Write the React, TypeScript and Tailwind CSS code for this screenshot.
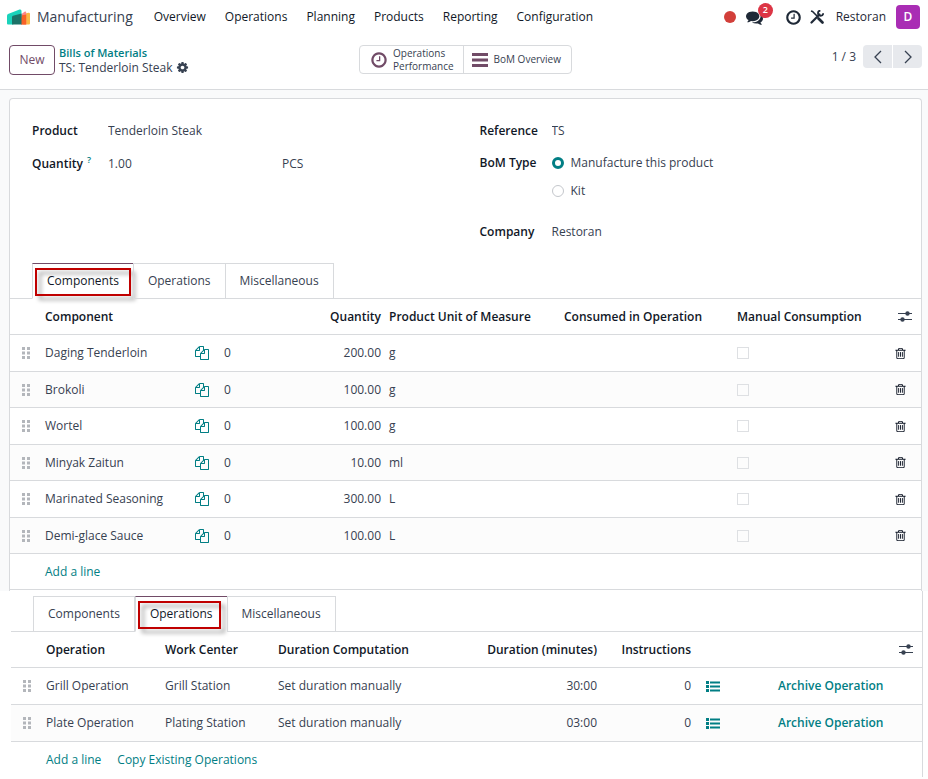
import type { ReactNode } from 'react'
import clsx from 'clsx'

const MENU = ['Overview', 'Operations', 'Planning', 'Products', 'Reporting', 'Configuration']
const TABS = ['Components', 'Operations', 'Miscellaneous']

const COMPONENTS = [
  { name: 'Daging Tenderloin', qty: '200.00', uom: 'g' },
  { name: 'Brokoli', qty: '100.00', uom: 'g' },
  { name: 'Wortel', qty: '100.00', uom: 'g' },
  { name: 'Minyak Zaitun', qty: '10.00', uom: 'ml' },
  { name: 'Marinated Seasoning', qty: '300.00', uom: 'L' },
  { name: 'Demi-glace Sauce', qty: '100.00', uom: 'L' },
]

const OPERATIONS = [
  { name: 'Grill Operation', center: 'Grill Station', duration: '30:00' },
  { name: 'Plate Operation', center: 'Plating Station', duration: '03:00' },
]

// Font Awesome 4 outlines, drawn on a 1792 grid
const PATHS = {
  clock:
    'M1024 544v448q0 14-9 23t-23 9h-320q-14 0-23-9t-9-23v-64q0-14 9-23t23-9h224v-352q0-14 9-23t23-9h64q14 0 23 9t9 23zm416 352q0-148-73-273t-198-198-273-73-273 73-198 198-73 273 73 273 198 198 273 73 273-73 198-198 73-273zm224 0q0 209-103 385.5t-279.5 279.5-385.5 103-385.5-103-279.5-279.5-103-385.5 103-385.5 279.5-279.5 385.5-103 385.5 103 279.5 279.5 103 385.5z',
  cog:
    'M1152 896q0-106-75-181t-181-75-181 75-75 181 75 181 181 75 181-75 75-181zm512-109v222q0 12-8 23t-20 13l-185 28q-19 54-39 91 35 50 107 138 10 12 10 25t-9 23q-27 37-99 108t-94 71q-12 0-26-9l-138-108q-44 23-91 38-16 136-29 186-7 28-36 28h-222q-14 0-24.5-8.5t-11.5-21.5l-28-184q-49-16-90-37l-141 107q-10 9-25 9-14 0-25-11-126-114-165-168-7-10-7-23 0-12 8-23 15-21 51-66.5t54-70.5q-27-50-41-99l-183-27q-13-2-21-12.5t-8-23.5v-222q0-12 8-23t19-13l186-28q14-46 39-92-40-57-107-138-10-12-10-24 0-10 9-23 26-36 98.5-107.5t94.5-71.5q13 0 26 10l138 107q44-23 91-38 16-136 29-186 7-28 36-28h222q14 0 24.5 8.5t11.5 21.5l28 184q49 16 90 37l142-107q9-9 24-9 13 0 25 10 129 119 165 170 7 8 7 22 0 12-8 23-15 21-51 66.5t-54 70.5q26 50 41 98l183 28q13 2 21 12.5t8 23.5z',
  comments:
    'M1408 768q0 139-94 257t-256.5 186.5-353.5 68.5q-86 0-176-16-124 88-278 128-36 9-86 16h-3q-11 0-20.5-8t-11.5-21q-1-3-1-6.5t.5-6.5 2-6l2.5-5 3.5-5.5 4-5 4.5-5 4-4.5q5-6 23-25t26-29.5 22.5-29 25-38.5 20.5-44q-124-72-195-177t-71-224q0-139 94-257t256.5-186.5 353.5-68.5 353.5 68.5 256.5 186.5 94 257zm384 256q0 120-71 224.5t-195 176.5q10 24 20.5 44t25 38.5 22.5 29 26 29.5 23 25q1 1 4 4.5t4.5 5 4 5 3.5 5.5l2.5 5 2 6 .5 6.5-1 6.5q-3 14-13 22t-22 7q-50-7-86-16-154-40-278-128-90 16-176 16-271 0-472-132 58 4 88 4 161 0 309-45t264-129q125-92 192-212t67-254q0-77-23-152 129 71 204 178t75 230z',
  copy:
    'M1696 384q40 0 68 28t28 68v1216q0 40-28 68t-68 28h-960q-40 0-68-28t-28-68v-288h-544q-40 0-68-28t-28-68v-672q0-40 20-88t48-76l408-408q28-28 76-48t88-20h416q40 0 68 28t28 68v328q68-40 128-40h416zm-544 213l-299 299h299v-299zm-640-384l-299 299h299v-299zm196 647l316-316v-416h-384v416q0 40-28 68t-68 28h-416v640h512v-256q0-40 20-88t48-76zm956 804v-1152h-384v416q0 40-28 68t-68 28h-416v640h896z',
  trash:
    'M704 736v576q0 14-9 23t-23 9h-64q-14 0-23-9t-9-23v-576q0-14 9-23t23-9h64q14 0 23 9t9 23zm256 0v576q0 14-9 23t-23 9h-64q-14 0-23-9t-9-23v-576q0-14 9-23t23-9h64q14 0 23 9t9 23zm256 0v576q0 14-9 23t-23 9h-64q-14 0-23-9t-9-23v-576q0-14 9-23t23-9h64q14 0 23 9t9 23zm128 724v-948h-896v948q0 22 7 40.5t14.5 27 10.5 8.5h832q3 0 10.5-8.5t14.5-27 7-40.5zm-672-1076h448l-48-117q-7-9-17-11h-317q-10 2-17 11zm928 32v64q0 14-9 23t-23 9h-96v948q0 83-47 143.5t-113 60.5h-832q-66 0-113-58.5t-47-141.5v-952h-96q-14 0-23-9t-9-23v-64q0-14 9-23t23-9h309l70-167q15-37 54-63t79-26h320q40 0 79 26t54 63l70 167h309q14 0 23 9t9 23z',
}

function Icon({ name, className }: { name: keyof typeof PATHS; className: string }) {
  return (
    <svg viewBox="0 0 1792 1792" fill="currentColor" className={className} aria-hidden="true">
      <path d={PATHS[name]} />
    </svg>
  )
}

function Logo() {
  return (
    <svg viewBox="0 0 23 16" className="h-4 w-[23px]" aria-hidden="true">
      <path d="M16 5l5.500-1.200q1.500-.2 1.500 1.200v9.500q0 1-1 1h-6z" fill="#fbb945" />
      <path d="M14 5.500l3.500-2.800q1.700-.7 1.700 1V15.500H14z" fill="#fc868b" />
      <path d="M14 6.500l5.200-1V15.500H14z" fill="#f86126" />
      <path d="M0 6.500q0-1 1-1.500L12.500.5Q14.500 0 14.500 2v6L6 15.500H1q-1 0-1-1z" fill="#1ad3bb" />
      <path d="M5 8q0-1 1-1.300l8.500-2.200v11H5z" fill="#1b7268" />
    </svg>
  )
}

function ToolsIcon() {
  return (
    <svg viewBox="0 0 14 14" className="size-3.5" fill="none" stroke="currentColor" aria-hidden="true">
      <path d="M1 1l1.500.5L7 6" strokeWidth="1.500" />
      <path d="M8.500 8.500l4 4" strokeWidth="2.600" strokeLinecap="round" />
      <path d="M1.500 12.500L9.500 4.500" strokeWidth="2.200" strokeLinecap="round" />
      <path d="M13.200 3.200a2.600 2.600 0 1 1-2.800-2.600" strokeWidth="1.800" />
    </svg>
  )
}

function AdjustIcon() {
  return (
    <svg viewBox="0 0 14 11" className="h-[11px] w-3.5 text-[#374151]" aria-hidden="true">
      <path d="M0 2.500h14M0 8.500h14" stroke="currentColor" />
      <circle cx="9.500" cy="2.500" r="2.200" fill="currentColor" />
      <circle cx="4.500" cy="8.500" r="2.200" fill="currentColor" />
    </svg>
  )
}

function ListIcon() {
  return (
    <svg viewBox="0 0 14 11" className="h-[11px] w-3.5" fill="currentColor" aria-hidden="true">
      <path d="M0 0h3v3H0zM0 4h3v3H0zM0 8h3v3H0zM4 .5h10v2H4zM4 4.500h10v2H4zM4 8.500h10v2H4z" />
    </svg>
  )
}

function DragHandle() {
  return (
    <svg viewBox="0 0 8 12" className="ml-2 h-3 w-2 text-[#b3b6bb]" fill="currentColor" aria-hidden="true">
      <path d="M0 0h3v3H0zM5 0h3v3H5zM0 4.500h3v3H0zM5 4.500h3v3H5zM0 9h3v3H0zM5 9h3v3H5z" />
    </svg>
  )
}

function Tabs({ active, marker }: { active: string; marker: string }) {
  return (
    <div role="tablist" className="flex border-b border-[#d8dadd] px-[22px]">
      {TABS.map((tab) => (
        <button
          key={tab}
          role="tab"
          aria-selected={tab === active}
          className={clsx(
            'relative -mb-px h-9 border px-3.5',
            tab === active
              ? 'border-[#d8dadd] border-t-[#714b67] border-b-white text-[#111827]'
              : '-ml-px border-[#d8dadd] first:ml-0',
          )}
        >
          {tab}
          {tab === active && (
            <span
              className={clsx(
                'absolute border-2 border-[#c00000] drop-shadow-[4px_4px_2px_rgba(0,0,0,0.4)]',
                marker,
              )}
            />
          )}
        </button>
      ))}
    </div>
  )
}

type FieldProps = { id: string; label: string; value: string; labelWidth: string; help?: boolean }

function Field({ id, label, value, labelWidth, help }: FieldProps) {
  return (
    <div className="flex h-[33px] items-center">
      <label htmlFor={id} className={clsx('shrink-0 font-semibold text-[#111827]', labelWidth)}>
        {label}
        {help && <sup className="ml-1 text-[9px] text-[#017e84]">?</sup>}
      </label>
      <input id={id} defaultValue={value} className="w-[174px] bg-transparent outline-none" />
      {help && <input aria-label="Unit of Measure" defaultValue="PCS" className="w-24 bg-transparent outline-none" />}
    </div>
  )
}

function BomTypeOption({ label, checked }: { label: string; checked?: boolean }) {
  return (
    <label className="flex h-7 items-center gap-[7px]">
      <input
        type="radio"
        name="bom_type"
        defaultChecked={checked}
        className="size-3 appearance-none rounded-full border border-[#c4c7cc] bg-white checked:border-[3px] checked:border-[#017e84]"
      />
      {label}
    </label>
  )
}

function ListTable({ children }: { children: ReactNode }) {
  return (
    <table className="w-full table-fixed border-separate border-spacing-0 text-left whitespace-nowrap [&_td]:border-b [&_td]:border-[#d8dadd] [&_td]:px-1 [&_th]:h-9 [&_th]:border-b [&_th]:border-[#d8dadd] [&_th]:px-1 [&_th]:font-semibold [&_th]:text-[#111827]">
      {children}
    </table>
  )
}

function ComponentsTable() {
  return (
    <ListTable>
      <colgroup>
        <col className="w-[31px]" />
        <col className="w-[150px]" />
        <col className="w-[84px]" />
        <col className="w-[110px]" />
        <col className="w-[175px]" />
        <col className="w-[173px]" />
        <col />
        <col className="w-10" />
      </colgroup>
      <thead>
        <tr>
          <th />
          <th>Component</th>
          <th />
          <th className="text-right">Quantity</th>
          <th>Product Unit of Measure</th>
          <th>Consumed in Operation</th>
          <th>Manual Consumption</th>
          <th>
            <button aria-label="Optional columns" className="ml-[13px] block">
              <AdjustIcon />
            </button>
          </th>
        </tr>
      </thead>
      <tbody>
        {COMPONENTS.map(({ name, qty, uom }) => (
          <tr key={name} className="odd:h-[37px] even:h-9 even:bg-[#fcfcfc]">
            <td><DragHandle /></td>
            <td>{name}</td>
            <td>
              <span className="flex items-center gap-[15px]">
                <button aria-label={`Bill of materials of ${name}`} className="text-[#017e84]">
                  <Icon name="copy" className="size-3.5" />
                </button>
                0
              </span>
            </td>
            <td className="text-right">{qty}</td>
            <td>{uom}</td>
            <td />
            <td>
              <input
                type="checkbox"
                aria-label={`Manual consumption of ${name}`}
                className="block size-3 appearance-none border border-[#dee0e3]"
              />
            </td>
            <td>
              <button aria-label={`Delete ${name}`} className="ml-[9px] block text-[#111827]">
                <Icon name="trash" className="size-[13px]" />
              </button>
            </td>
          </tr>
        ))}
        <tr className="h-9">
          <td />
          <td colSpan={7}>
            <a href="#" className="text-[#017e84]">Add a line</a>
          </td>
        </tr>
      </tbody>
    </ListTable>
  )
}

function OperationsTable() {
  return (
    <ListTable>
      <colgroup>
        <col className="w-[31px]" />
        <col className="w-[119px]" />
        <col className="w-[113px]" />
        <col className="w-[160px]" />
        <col className="w-[167px]" />
        <col className="w-[94px]" />
        <col className="w-[79px]" />
        <col />
        <col className="w-8" />
      </colgroup>
      <thead>
        <tr>
          <th />
          <th>Operation</th>
          <th>Work Center</th>
          <th>Duration Computation</th>
          <th className="text-right">Duration (minutes)</th>
          <th className="text-right">Instructions</th>
          <th />
          <th />
          <th>
            <button aria-label="Optional columns" className="ml-[5px] block">
              <AdjustIcon />
            </button>
          </th>
        </tr>
      </thead>
      <tbody>
        {OPERATIONS.map(({ name, center, duration }) => (
          <tr key={name} className="h-[37px] even:bg-[#fcfcfc]">
            <td><DragHandle /></td>
            <td>{name}</td>
            <td>{center}</td>
            <td>Set duration manually</td>
            <td className="text-right">{duration}</td>
            <td className="text-right">0</td>
            <td>
              <button aria-label={`Instructions of ${name}`} className="ml-[7px] block text-[#017e84]">
                <ListIcon />
              </button>
            </td>
            <td>
              <button className="font-semibold text-[#017e84]">Archive Operation</button>
            </td>
            <td />
          </tr>
        ))}
      </tbody>
    </ListTable>
  )
}

function Navbar() {
  return (
    <header className="flex h-[34px] items-center pr-2 pl-[7px]">
      <Logo />
      <span className="ml-[7px] text-sm text-[#374151]">Manufacturing</span>
      <nav className="ml-[21px] flex flex-1 gap-[19px] text-[#111827]">
        {MENU.map((item) => (
          <a key={item} href="#">{item}</a>
        ))}
      </nav>
      <div className="flex items-center text-[#1f2937]">
        <span className="size-3 rounded-full bg-[#d23f3a]" />
        <button aria-label="Messages" className="relative ml-2.5">
          <Icon name="comments" className="size-[17px]" />
          <span className="absolute -top-1.5 left-3 flex size-[15px] items-center justify-center rounded-full bg-[#dc3545] text-[9px] font-semibold text-white">
            2
          </span>
        </button>
        <button aria-label="Activities" className="ml-[22px]">
          <Icon name="clock" className="size-[17px]" />
        </button>
        <button aria-label="Developer tools" className="ml-2">
          <ToolsIcon />
        </button>
        <span className="ml-3">Restoran</span>
        <button
          aria-label="User menu"
          className="ml-2.5 flex size-6 items-center justify-center rounded bg-[#a92db4] font-semibold text-white"
        >
          D
        </button>
      </div>
    </header>
  )
}

function ControlPanel() {
  return (
    <div className="grid grid-cols-[1fr_auto_1fr] items-start border-b border-[#d8dadd] pt-[11px] pr-1.5 pb-3.5 pl-[9px]">
      <div className="flex gap-1">
        <button className="h-[30px] w-[46px] rounded border border-[#714b67] text-[#714b67]">New</button>
        <div className="leading-[15px]">
          <a href="#" className="block text-[11px] font-semibold text-[#017e84]">Bills of Materials</a>
          <div className="flex items-center gap-1">
            TS: Tenderloin Steak
            <button aria-label="Actions">
              <Icon name="cog" className="size-[13px]" />
            </button>
          </div>
        </div>
      </div>

      <div className="flex h-[29px] rounded border border-[#d8dadd] text-[10px] leading-[13px]">
        <button className="flex items-center gap-[5px] border-r border-[#d8dadd] pr-[9px] pl-2.5 text-left">
          <Icon name="clock" className="size-[18px] text-[#714b67]" />
          <span>Operations<br />Performance</span>
        </button>
        <button className="flex items-center gap-1.5 pr-2.5 pl-2">
          <svg viewBox="0 0 16 14" className="h-3.5 w-4 text-[#714b67]" fill="currentColor" aria-hidden="true">
            <path d="M0 0h16v3H0zM0 5.500h16v3H0zM0 11h16v3H0z" />
          </svg>
          BoM Overview
        </button>
      </div>

      <div className="flex h-[23px] items-center justify-end gap-px">
        <span className="mr-1.5">1 / 3</span>
        <button aria-label="Previous" className="flex h-full w-[29px] items-center justify-center rounded-l bg-[#e7e9ed]">
          <svg viewBox="0 0 8 14" className="h-3.5 w-2" fill="none" stroke="currentColor" strokeWidth="1.300">
            <path d="M7 1L1 7l6 6" />
          </svg>
        </button>
        <button aria-label="Next" className="flex h-full w-[29px] items-center justify-center rounded-r bg-[#e7e9ed]">
          <svg viewBox="0 0 8 14" className="h-3.5 w-2" fill="none" stroke="currentColor" strokeWidth="1.300">
            <path d="M1 1l6 6-6 6" />
          </svg>
        </button>
      </div>
    </div>
  )
}

export default function App() {
  return (
    <div className="bg-white font-['Open_Sans','Noto_Sans',sans-serif] text-xs text-[#374151]">
      <Navbar />
      <ControlPanel />

      <main>
        <div className="bg-[#f9fafb] pt-2 pr-1.5 pl-[9px]">
          <section className="rounded-t border border-b-0 border-[#d8dadd] bg-white pb-px">
            <div className="grid grid-cols-2 px-[22px] py-[15px]">
              <div>
                <Field id="product" label="Product" value="Tenderloin Steak" labelWidth="w-[76px]" />
                <Field id="quantity" label="Quantity" value="1.00" labelWidth="w-[76px]" help />
              </div>
              <div className="pl-3.5">
                <Field id="reference" label="Reference" value="TS" labelWidth="w-[72px]" />
                <fieldset className="flex pt-0.5 pb-2.5">
                  <legend className="float-left h-7 w-[72px] leading-7 font-semibold text-[#111827]">BoM Type</legend>
                  <div>
                    <BomTypeOption label="Manufacture this product" checked />
                    <BomTypeOption label="Kit" />
                  </div>
                </fieldset>
                <Field id="company" label="Company" value="Restoran" labelWidth="w-[72px]" />
              </div>
            </div>
            <Tabs active="Components" marker="inset-x-0.5 top-1 bottom-0.5" />
            <ComponentsTable />
          </section>
        </div>

        <section className="mr-[5px] ml-[11px] border-r border-[#d8dadd] pt-[5px]">
          <Tabs active="Operations" marker="top-1 right-1.5 bottom-0.5 left-0.5" />
          <OperationsTable />
          <div className="flex h-[35px] items-center gap-4 pl-[35px] text-[#017e84]">
            <a href="#">Add a line</a>
            <a href="#">Copy Existing Operations</a>
          </div>
        </section>
      </main>
    </div>
  )
}
